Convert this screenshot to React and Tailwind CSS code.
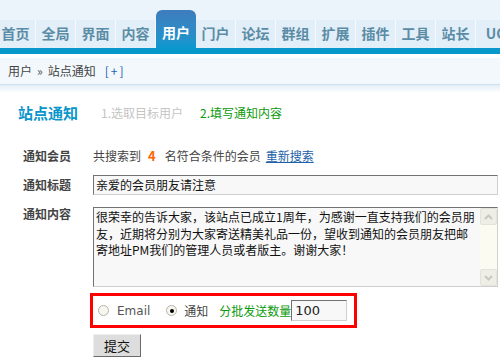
import React from "react";

const navItems = ["首页", "全局", "界面", "内容", "用户", "门户", "论坛", "群组", "扩展", "插件", "工具", "站长", "UC"];

export default function App() {
  const font = { fontFamily: '"Noto Sans CJK SC", "DejaVu Sans", sans-serif' };
  return (
    <div className="w-[500px] h-[361px] overflow-hidden bg-white text-[12px] text-[#333]" style={font}>
      {/* header */}
      <div className="h-[48px] bg-[#ebf4fb] flex items-end overflow-hidden">
        <div className="flex items-end -ml-[4px]">
          {navItems.map((n) =>
            n === "用户" ? (
              <div
                key={n}
                className="w-[40px] h-[38px] shrink-0 rounded-t-[6px] bg-gradient-to-b from-[#3e7cbd] to-[#0898cf] text-white font-bold text-[14px] flex items-end justify-center pb-[8px] leading-[16px]"
              >
                {n}
              </div>
            ) : (
              <div
                key={n}
                className="w-[40px] h-[28px] shrink-0 bg-[#e2eef8] border-r border-[#f6fafd] text-[#5b8ca6] font-bold text-[14px] flex items-center justify-center pb-[2px] leading-[16px] whitespace-nowrap"
              >
                {n}
              </div>
            )
          )}
        </div>
      </div>
      <div className="h-[6px] bg-[#0998cb]" />
      <div className="h-[4px] bg-white" />
      {/* breadcrumb */}
      <div className="h-[27px] bg-[#f2f8fc] border-b border-[#cfe1ee] flex items-center pl-[8px] text-[#444] text-[12px]">
        <span>用户</span>
        <span className="mx-[5px] text-[#555]">»</span>
        <span>站点通知</span>
        <span className="ml-[9px] text-[#1a5fb4] tracking-[2px]">[+]</span>
      </div>
      <div className="h-[8px] bg-gradient-to-b from-[#e3eef7] to-white" />

      {/* title */}
      <div className="mt-[10px] flex items-center h-[20px]">
        <span className="ml-[18px] text-[15px] font-bold text-[#0a95cc] leading-[20px]">站点通知</span>
        <span className="ml-[23px] text-[#c4c4c4]">1.选取目标用户</span>
        <span className="ml-[17px] text-[#0a9a0a]">2.填写通知内容</span>
      </div>

      {/* row 1 */}
      <div className="mt-[23px] flex items-center h-[20px]">
        <div className="w-[93px] pl-[23px] font-bold text-[#444] shrink-0">通知会员</div>
        <span className="text-[#444]">共搜索到</span>
        <span className="ml-[7px] mr-[9px] text-[#f60] font-bold text-[13px]">4</span>
        <span className="text-[#444]">名符合条件的会员</span>
        <span className="ml-[5px] text-[#2060a8] underline">重新搜索</span>
      </div>

      {/* row 2 */}
      <div className="mt-[9px] flex items-center h-[20px]">
        <div className="w-[93px] pl-[23px] font-bold text-[#444] shrink-0">通知标题</div>
        <div className="w-[405px] h-[20px] bg-[#f8f8f8] border border-t-[#727272] border-l-[#727272] border-r-[#cfcfcf] border-b-[#cfcfcf] flex items-center pl-[2px] text-[#111] text-[12px]">
          亲爱的会员朋友请注意
        </div>
      </div>

      {/* row 3 */}
      <div className="mt-[12px] flex items-start">
        <div className="w-[93px] pl-[23px] font-bold text-[#444] shrink-0 leading-[14px] pt-0">通知内容</div>
        <div className="w-[405px] h-[80px] bg-[#f8f8f8] border border-t-[#727272] border-l-[#727272] border-r-[#cfcfcf] border-b-[#cfcfcf] flex">
          <div className="flex-1 pl-[2px] pt-[1px] text-[#111] text-[12px] leading-[16.5px] whitespace-nowrap">
            <div>很荣幸的告诉大家，该站点已成立1周年，为感谢一直支持我们的会员朋</div>
            <div>友，近期将分别为大家寄送精美礼品一份，望收到通知的会员朋友把邮</div>
            <div>寄地址PM我们的管理人员或者版主。谢谢大家！</div>
          </div>
          <div className="w-[17px] h-full bg-[#fbfbf1] flex flex-col justify-between">
            <div className="h-[17px] bg-[#eeeee6] border border-[#e3e3da] rounded-[2px] flex items-center justify-center">
              <svg width="9" height="6" viewBox="0 0 9 6"><path d="M1 5 L4.5 1.5 L8 5" stroke="#c8c8c0" strokeWidth="2" fill="none" /></svg>
            </div>
            <div className="h-[17px] bg-[#eeeee6] border border-[#e3e3da] rounded-[2px] flex items-center justify-center">
              <svg width="9" height="6" viewBox="0 0 9 6"><path d="M1 1 L4.5 4.5 L8 1" stroke="#c8c8c0" strokeWidth="2" fill="none" /></svg>
            </div>
          </div>
        </div>
      </div>

      {/* red box */}
      <div className="mt-[6px] ml-[90px] w-[267px] h-[35px] border-[3px] border-[#ff0000] flex items-center">
        <span className="ml-[5px] w-[11px] h-[11px] rounded-full border border-[#b5b5ad] bg-[#f7f7f0]" />
        <span className="ml-[8px] text-[#555] text-[12px]" style={{ fontFamily: '"DejaVu Sans", sans-serif' }}>Email</span>
        <span className="ml-[16px] w-[11px] h-[11px] rounded-full border border-[#b5b5ad] bg-[#f7f7f0] flex items-center justify-center">
          <span className="w-[4px] h-[4px] rounded-full bg-black" />
        </span>
        <span className="ml-[7px] text-[#444]">通知</span>
        <span className="ml-[11px] text-[#0a9a0a]">分批发送数量</span>
        <div className="w-[56px] h-[21px] bg-[#f8f8f8] border border-t-[#727272] border-l-[#727272] border-r-[#cfcfcf] border-b-[#cfcfcf] flex items-center pl-[3px] text-[#222] text-[13px]" style={{ fontFamily: '"DejaVu Sans", sans-serif' }}>
          100
        </div>
      </div>

      {/* submit */}
      <div className="mt-[6px] ml-[93px] w-[48px] h-[23px] bg-[#dddddd] border border-t-[#eeeeee] border-l-[#eeeeee] border-r-[#6a6a6a] border-b-[#6a6a6a] flex items-center justify-center text-[#111] text-[13px]">
        提交
      </div>
    </div>
  );
}
